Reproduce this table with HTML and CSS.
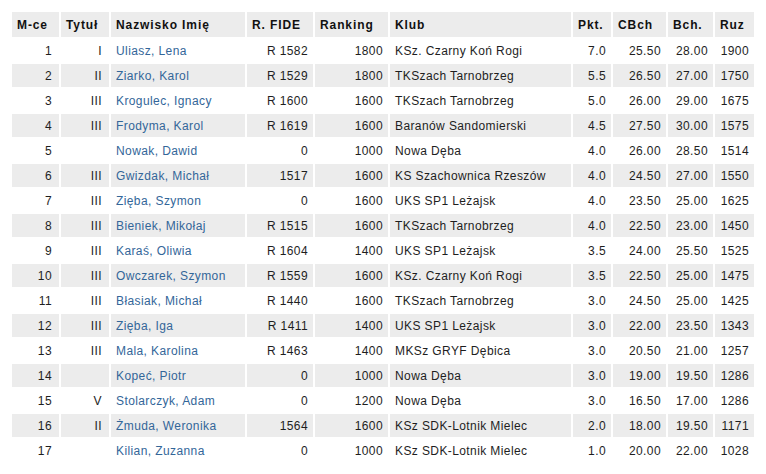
FILE: index.html
```html
<!DOCTYPE html>
<html>
<head>
<meta charset="utf-8">
<link rel="stylesheet" href="styles.css">
</head>
<body>
<table class="results">
<colgroup>
<col class="c1"><col class="c2"><col class="c3"><col class="c4"><col class="c5"><col class="c6"><col class="c7"><col class="c8"><col class="c9"><col class="c10">
</colgroup>
<thead>
<tr><th>M-ce</th><th>Tytuł</th><th>Nazwisko Imię</th><th>R. FIDE</th><th>Ranking</th><th>Klub</th><th>Pkt.</th><th>CBch</th><th>Bch.</th><th>Ruz</th></tr>
</thead>
<tbody>
<tr><td class="r p8">1</td><td class="r p8">I</td><td><a class="name">Uliasz, Lena</a></td><td class="r">R 1582</td><td class="r">1800</td><td>KSz. Czarny Koń Rogi</td><td class="r">7.0</td><td class="r">25.50</td><td class="r">28.00</td><td class="r">1900</td></tr>
<tr><td class="r p8">2</td><td class="r p8">II</td><td><a class="name">Ziarko, Karol</a></td><td class="r">R 1529</td><td class="r">1800</td><td>TKSzach Tarnobrzeg</td><td class="r">5.5</td><td class="r">26.50</td><td class="r">27.00</td><td class="r">1750</td></tr>
<tr><td class="r p8">3</td><td class="r p8">III</td><td><a class="name">Krogulec, Ignacy</a></td><td class="r">R 1600</td><td class="r">1600</td><td>TKSzach Tarnobrzeg</td><td class="r">5.0</td><td class="r">26.00</td><td class="r">29.00</td><td class="r">1675</td></tr>
<tr><td class="r p8">4</td><td class="r p8">III</td><td><a class="name">Frodyma, Karol</a></td><td class="r">R 1619</td><td class="r">1600</td><td>Baranów Sandomierski</td><td class="r">4.5</td><td class="r">27.50</td><td class="r">30.00</td><td class="r">1575</td></tr>
<tr><td class="r p8">5</td><td class="r p8"></td><td><a class="name">Nowak, Dawid</a></td><td class="r">0</td><td class="r">1000</td><td>Nowa Dęba</td><td class="r">4.0</td><td class="r">26.00</td><td class="r">28.50</td><td class="r">1514</td></tr>
<tr><td class="r p8">6</td><td class="r p8">III</td><td><a class="name">Gwizdak, Michał</a></td><td class="r">1517</td><td class="r">1600</td><td>KS Szachownica Rzeszów</td><td class="r">4.0</td><td class="r">24.50</td><td class="r">27.00</td><td class="r">1550</td></tr>
<tr><td class="r p8">7</td><td class="r p8">III</td><td><a class="name">Zięba, Szymon</a></td><td class="r">0</td><td class="r">1600</td><td>UKS SP1 Leżajsk</td><td class="r">4.0</td><td class="r">23.50</td><td class="r">25.00</td><td class="r">1625</td></tr>
<tr><td class="r p8">8</td><td class="r p8">III</td><td><a class="name">Bieniek, Mikołaj</a></td><td class="r">R 1515</td><td class="r">1600</td><td>TKSzach Tarnobrzeg</td><td class="r">4.0</td><td class="r">22.50</td><td class="r">23.00</td><td class="r">1450</td></tr>
<tr><td class="r p8">9</td><td class="r p8">III</td><td><a class="name">Karaś, Oliwia</a></td><td class="r">R 1604</td><td class="r">1400</td><td>UKS SP1 Leżajsk</td><td class="r">3.5</td><td class="r">24.00</td><td class="r">25.50</td><td class="r">1525</td></tr>
<tr><td class="r p8">10</td><td class="r p8">III</td><td><a class="name">Owczarek, Szymon</a></td><td class="r">R 1559</td><td class="r">1600</td><td>KSz. Czarny Koń Rogi</td><td class="r">3.5</td><td class="r">22.50</td><td class="r">25.00</td><td class="r">1475</td></tr>
<tr><td class="r p8">11</td><td class="r p8">III</td><td><a class="name">Błasiak, Michał</a></td><td class="r">R 1440</td><td class="r">1600</td><td>TKSzach Tarnobrzeg</td><td class="r">3.0</td><td class="r">24.50</td><td class="r">25.00</td><td class="r">1425</td></tr>
<tr><td class="r p8">12</td><td class="r p8">III</td><td><a class="name">Zięba, Iga</a></td><td class="r">R 1411</td><td class="r">1400</td><td>UKS SP1 Leżajsk</td><td class="r">3.0</td><td class="r">22.00</td><td class="r">23.50</td><td class="r">1343</td></tr>
<tr><td class="r p8">13</td><td class="r p8">III</td><td><a class="name">Mala, Karolina</a></td><td class="r">R 1463</td><td class="r">1400</td><td>MKSz GRYF Dębica</td><td class="r">3.0</td><td class="r">20.50</td><td class="r">21.00</td><td class="r">1257</td></tr>
<tr><td class="r p8">14</td><td class="r p8"></td><td><a class="name">Kopeć, Piotr</a></td><td class="r">0</td><td class="r">1000</td><td>Nowa Dęba</td><td class="r">3.0</td><td class="r">19.00</td><td class="r">19.50</td><td class="r">1286</td></tr>
<tr><td class="r p8">15</td><td class="r p8">V</td><td><a class="name">Stolarczyk, Adam</a></td><td class="r">0</td><td class="r">1200</td><td>Nowa Dęba</td><td class="r">3.0</td><td class="r">16.50</td><td class="r">17.00</td><td class="r">1286</td></tr>
<tr><td class="r p8">16</td><td class="r p8">II</td><td><a class="name">Żmuda, Weronika</a></td><td class="r">1564</td><td class="r">1600</td><td>KSz SDK-Lotnik Mielec</td><td class="r">2.0</td><td class="r">18.00</td><td class="r">19.50</td><td class="r">1171</td></tr>
<tr><td class="r p8">17</td><td class="r p8"></td><td><a class="name">Kilian, Zuzanna</a></td><td class="r">0</td><td class="r">1000</td><td>KSz SDK-Lotnik Mielec</td><td class="r">1.0</td><td class="r">20.00</td><td class="r">22.00</td><td class="r">1028</td></tr>
</tbody>
</table>
</body>
</html>
```
FILE: styles.css
```css
html, body {
  background: #ffffff;
}
body {
  margin: 10px;
  font-family: "Liberation Sans", Arial, sans-serif;
  font-size: 12px;
  color: #1e1e1e;
}
.results {
  border-collapse: separate;
  border-spacing: 2px;
  table-layout: fixed;
  width: 746px;
}
.c1 { width: 47px; }
.c2 { width: 48px; }
.c3 { width: 134px; }
.c4 { width: 66px; }
.c5 { width: 73px; }
.c6 { width: 181px; }
.c7 { width: 38px; }
.c8 { width: 53px; }
.c9 { width: 45px; }
.c10 { width: 39px; }
.results th {
  background: #ececec;
  font-weight: bold;
  text-align: left;
  letter-spacing: 0.9px;
  color: #111111;
  height: 25px;
  padding: 0 5px;
  box-sizing: border-box;
}
.results td {
  height: 23px;
  padding: 0 5px;
  box-sizing: border-box;
  letter-spacing: 0.4px;
  white-space: nowrap;
  overflow: hidden;
}
.results tbody tr:nth-child(even) td {
  background: #ececec;
}
.r { text-align: right; }
.results td.p8 { padding-right: 7px; }
.name {
  color: #336699;
  text-decoration: none;
}
```
